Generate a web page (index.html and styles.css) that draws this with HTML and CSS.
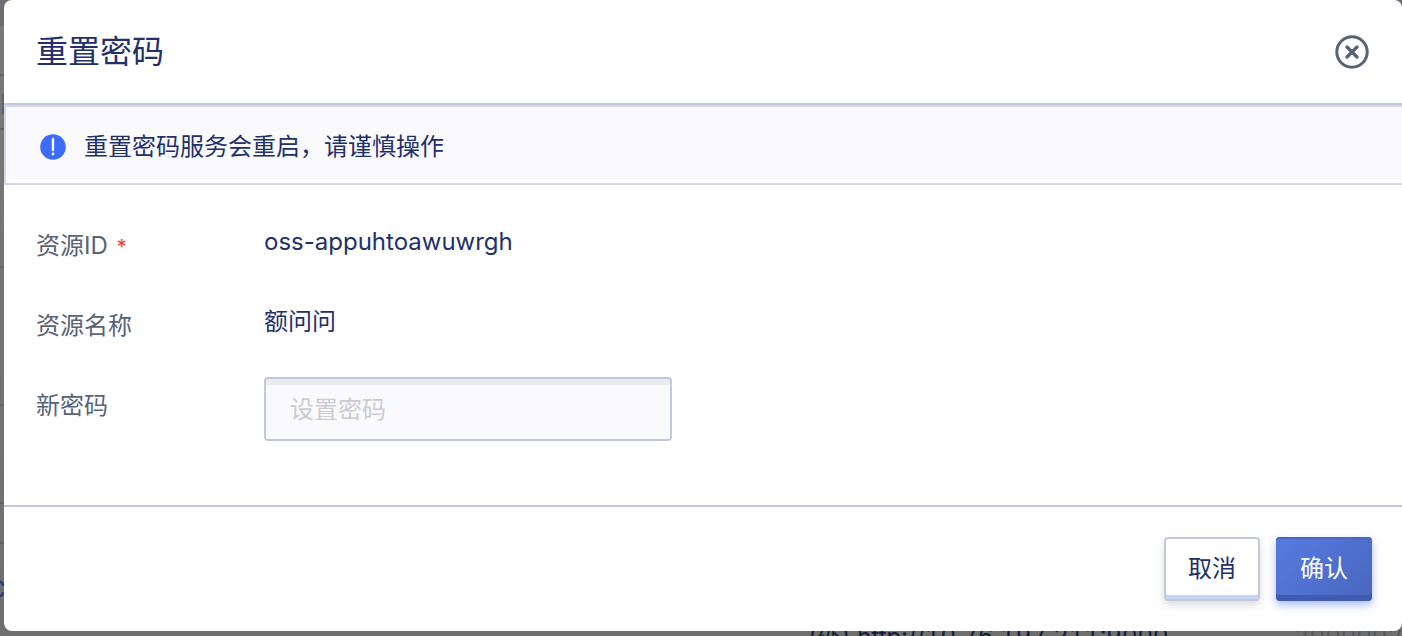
FILE: index.html
```html
<!DOCTYPE html>
<html lang="zh-CN">
<head>
<meta charset="utf-8">
<meta name="viewport" content="width=device-width, initial-scale=1">
<title>重置密码</title>
<link rel="stylesheet" href="styles.css">
</head>
<body>
<div class="backdrop" aria-hidden="true">
  <div class="backdrop-top"></div>
  <i class="rule rule-1"></i>
  <i class="rule rule-2"></i>
  <i class="rule rule-3"></i>
  <i class="rule rule-4"></i>
  <i class="rule rule-5"></i>
  <i class="rule rule-6"></i>
  <i class="tick"></i>
  <span class="ghost ghost-link">C</span>
  <span class="ghost ghost-url">(外) http://10.76.197.211:9000</span>
  <span class="ghost ghost-num">20000023</span>
</div>
<form class="modal" role="dialog" aria-labelledby="title">
  <header class="modal-header">
    <h1 class="modal-title" id="title">重置密码</h1>
    <button class="close" type="button" aria-label="关闭">
      <svg viewBox="0 0 34 34" width="34" height="34" fill="none" stroke="#576376">
        <circle cx="17" cy="17" r="15.2" stroke-width="3"/>
        <path d="M12 12l10 10M22 12L12 22" stroke-width="3.4" stroke-linecap="round"/>
      </svg>
    </button>
  </header>
  <div class="notice" role="alert">
    <svg class="notice-icon" viewBox="0 0 26 26" width="26" height="26">
      <circle cx="13" cy="13" r="12.8" fill="#3d6bfa"/>
      <path d="M13 5v11" stroke="#fff" stroke-width="2.4" stroke-linecap="round"/>
      <circle cx="13" cy="20" r="1.4" fill="#fff"/>
    </svg>
    <p class="notice-text">重置密码服务会重启，请谨慎操作</p>
  </div>
  <div class="fields">
    <div class="row">
      <span class="label">资源ID <span class="required">*</span></span>
      <span class="value">oss-appuhtoawuwrgh</span>
    </div>
    <div class="row">
      <span class="label">资源名称</span>
      <span class="value">额问问</span>
    </div>
    <div class="row">
      <label class="label" for="password">新密码</label>
      <input class="input" id="password" type="password" placeholder="设置密码">
    </div>
  </div>
  <footer class="modal-footer">
    <button class="button button-cancel" type="button">取消</button>
    <button class="button button-confirm" type="submit">确认</button>
  </footer>
</form>
</body>
</html>
```
FILE: styles.css
```css
* {
  box-sizing: border-box;
}

body {
  position: relative;
  min-height: 100vh;
  margin: 0;
  padding: 0 0 5px 4px;
  overflow: hidden;
  background: #6f6f70;
  color: #22306a;
  font-family: "Inter", "Noto Sans CJK SC", sans-serif;
  font-size: 24px;
  line-height: 32px;
}

/* Dimmed page behind the dialog */
.backdrop {
  position: absolute;
  inset: 0;
  overflow: hidden;
  background: linear-gradient(#7a7977, #6f6f70);
}

.backdrop-top {
  height: 26px;
  background: #6c6d72;
}

.rule {
  position: absolute;
  left: 0;
  width: 4px;
  height: 2px;
  background: #62636a;
}

.rule-1 { top: 74px; }
.rule-2 { top: 128px; }
.rule-3 { top: 266px; }
.rule-4 { top: 404px; }
.rule-5 { top: 502px; }
.rule-6 { top: 542px; }

.tick {
  position: absolute;
  top: 94px;
  left: 2px;
  width: 2px;
  height: 20px;
  background: #62636a;
}

.ghost {
  position: absolute;
  color: #121a38;
  font-variant-numeric: tabular-nums;
  white-space: nowrap;
}

.ghost-link {
  top: 574px;
  left: -12px;
  color: #1c3384;
}

.ghost-url {
  top: 621px;
  left: 808px;
}

.ghost-num {
  top: 621px;
  left: 1294px;
  color: #56575e;
}

.modal {
  position: relative;
  overflow: hidden;
  border-radius: 8px;
  background: #fff;
}

.modal-header {
  display: flex;
  align-items: center;
  justify-content: space-between;
  padding: 28px 33px 27px 32px;
  border-bottom: 2px solid #c4c9da;
}

.modal-title {
  margin: 0;
  font-size: 32px;
  font-weight: 400;
  line-height: 48px;
}

.close {
  display: flex;
  padding: 0;
  border: 0;
  background: none;
}

.notice {
  display: flex;
  align-items: center;
  gap: 18px;
  padding: 24px 34px 20px;
  border: 2px solid #d4d7ea;
  border-right: 0;
  border-radius: 2px 0 0 2px;
  background: #fafafd;
}

.notice-text {
  margin: 0;
}

.fields {
  display: grid;
  gap: 16px;
  padding: 32px 32px 64px;
}

.row {
  display: grid;
  grid-template-columns: 228px 1fr;
  align-items: start;
}

.label {
  padding-top: 13px;
  color: #576376;
}

.required {
  margin-left: 2px;
  color: #ea4a36;
  font-size: 20px;
  font-weight: 500;
}

.value {
  padding: 9px 0 23px;
}

.input {
  width: 408px;
  max-width: 100%;
  height: 64px;
  padding: 0 24px;
  border: 2px solid #c4c9da;
  border-radius: 4px;
  background: #fafafd;
  box-shadow: inset 0 6px 0 #ececef;
  color: inherit;
  font: inherit;
}

.input::placeholder {
  color: #cbcbd3;
  opacity: 1;
}

.modal-footer {
  display: flex;
  justify-content: flex-end;
  gap: 16px;
  padding: 30px;
  border-top: 2px solid #c4c9da;
}

.button {
  height: 64px;
  padding: 0 24px;
  border: 0;
  border-radius: 4px;
  font: inherit;
}

.button-cancel {
  padding: 0 22px;
  border: 2px solid #c4c9da;
  background: #fff;
  box-shadow: inset 0 -4px 0 #c5d5f6, 0 4px 8px rgba(0, 0, 0, 0.14);
  color: #22306a;
}

.button-confirm {
  background: linear-gradient(135deg, #567be0, #4966be);
  box-shadow: inset 0 2px 0 #4968bd, inset 0 -6px 0 #405bae, 0 4px 8px rgba(61, 99, 240, 0.45);
  color: #fff;
}
```
